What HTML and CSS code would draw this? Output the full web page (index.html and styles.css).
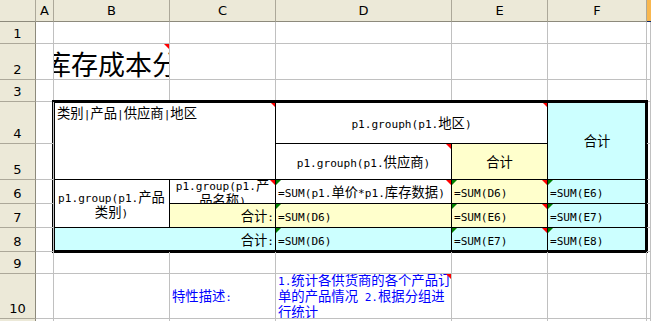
FILE: index.html
```html
<!DOCTYPE html>
<html lang="zh">
<head>
<meta charset="utf-8">
<title>库存成本分析</title>
<link rel="stylesheet" href="styles.css">
</head>
<body>
<div class="sheet">
  <div class="hd"></div><div class="hd">A</div><div class="hd">B</div><div class="hd">C</div><div class="hd">D</div><div class="hd">E</div><div class="hd">F</div><div class="hd hot"></div>

  <div class="rh">1</div><div class="c"></div><div class="c"></div><div class="c"></div><div class="c"></div><div class="c"></div><div class="c"></div><div class="c"></div>

  <div class="rh">2</div><div class="c"></div><div class="c title cm"><span class="ttl">库存成本分析</span></div><div class="c"></div><div class="c"></div><div class="c"></div><div class="c"></div><div class="c"></div>

  <div class="rh">3</div><div class="c"></div><div class="c"></div><div class="c"></div><div class="c"></div><div class="c"></div><div class="c"></div><div class="c"></div>

  <div class="tbl">
    <div class="t top cm span-c2 span-r2"><span class="x">类别<span class="m">|</span>产品<span class="m">|</span>供应商<span class="m">|</span>地区</span></div>
    <div class="t ctr cm span-c2"><span class="x"><span class="m">p1.grouph(p1.</span>地区<span class="m">)</span></span></div>
    <div class="t ctr b span-r2"><span class="x">合计</span></div>
    <div class="t ctr cm"><span class="x"><span class="m">p1.grouph(p1.</span>供应商<span class="m">)</span></span></div>
    <div class="t ctr y"><span class="x">合计</span></div>

    <div class="t ctr span-r2"><span class="x"><span class="m">p1.group(p1.</span>产品<br>类别<span class="m">)</span></span></div>
    <div class="t ctr cm"><span class="x"><span class="m">p1.group(p1.</span>产<br>品名称<span class="m">)</span></span></div>
    <div class="t cm er"><span class="x"><span class="m">=SUM(p1.</span>单价<span class="m">*p1.</span>库存数据<span class="m">)</span></span></div>
    <div class="t y cm er"><span class="x"><span class="m">=SUM(D6)</span></span></div>
    <div class="t b er"><span class="x"><span class="m">=SUM(E6)</span></span></div>

    <div class="t y rt"><span class="x">合计<span class="m">:</span></span></div>
    <div class="t y er"><span class="x"><span class="m">=SUM(D6)</span></span></div>
    <div class="t y cm er"><span class="x"><span class="m">=SUM(E6)</span></span></div>
    <div class="t b er"><span class="x"><span class="m">=SUM(E7)</span></span></div>

    <div class="t b rt span-c2"><span class="x">合计<span class="m">:</span></span></div>
    <div class="t b er"><span class="x"><span class="m">=SUM(D6)</span></span></div>
    <div class="t b cm er"><span class="x"><span class="m">=SUM(E7)</span></span></div>
    <div class="t b er"><span class="x"><span class="m">=SUM(E8)</span></span></div>
  </div>

  <div class="rh">4</div><div class="c"></div><div class="c"></div>
  <div class="rh">5</div><div class="c"></div><div class="c"></div>
  <div class="rh">6</div><div class="c"></div><div class="c"></div>
  <div class="rh">7</div><div class="c"></div><div class="c"></div>
  <div class="rh">8</div><div class="c"></div><div class="c"></div>

  <div class="rh">9</div><div class="c"></div><div class="c"></div><div class="c"></div><div class="c"></div><div class="c"></div><div class="c"></div><div class="c"></div>

  <div class="rh">10</div><div class="c"></div><div class="c"></div>
  <div class="c note"><span class="x">特性描述<span class="m">:</span></span></div>
  <div class="c note desc cm"><span class="x"><span class="m">1.</span>统计各供货商的各个产品订<br>单的产品情况<span class="m"> 2.</span>根据分组进<br>行统计</span></div>
  <div class="c"></div><div class="c"></div><div class="c"></div>

  <div class="rh">11</div><div class="c"></div><div class="c"></div><div class="c"></div><div class="c"></div><div class="c"></div><div class="c"></div><div class="c"></div>
</div>
</body>
</html>
```

FILE: styles.css
```css
* { box-sizing: border-box; }

html, body {
  margin: 0;
  padding: 0;
  background: #fff;
  overflow: hidden;
}

.sheet {
  display: grid;
  grid-template-columns: 36px 18px 116px 106px 176px 96px 99px 1fr;
  grid-template-rows: 22px 22px 36px 22px 42px 36px 24px 24px 24px 22px 45px 20px;
  width: 651px;
  height: 321px;
  overflow: hidden;
  font-family: "Noto Sans CJK SC", sans-serif;
  color: #000;
}

.hd {
  background: #ECE9D8;
  border-right: 1px solid #ACA899;
  border-bottom: 1px solid #8D8A7C;
  font: 13px/21px "DejaVu Sans", sans-serif;
  text-align: center;
}

.hd.hot {
  background: #F8B74F;
  border-right: none;
  border-bottom: 1px solid #0A246A;
}

.rh {
  background: #ECE9D8;
  border-right: 1px solid #8D8A7C;
  border-bottom: 1px solid #ACA899;
  font: 13px/15px "DejaVu Sans", sans-serif;
  display: flex;
  align-items: flex-end;
  justify-content: center;
  padding-bottom: 2px;
}

.c {
  position: relative;
  border-right: 1px solid #C0C0C0;
  border-bottom: 1px solid #C0C0C0;
}

.title {
  overflow: hidden;
  display: flex;
  align-items: flex-end;
  padding-bottom: 2px;
}

.ttl {
  display: block;
  margin-left: -10px;
  white-space: nowrap;
  font-size: 27px;
  line-height: 27px;
}

.x { display: block; }

.m {
  font-family: "DejaVu Sans Mono", monospace;
  font-size: 11.1px;
  line-height: 8px;
}

/* report table */
.tbl {
  grid-column: 3 / 8;
  grid-row: 5 / 10;
  position: relative;
  display: grid;
  grid-template-columns: 116px 106px 176px 96px 99px;
  grid-template-rows: 42px 36px 24px 24px 24px;
}

.tbl::after {
  content: "";
  position: absolute;
  left: -2px;
  top: -2px;
  right: -1px;
  bottom: -1px;
  border: 3px solid #000;
  pointer-events: none;
}

.t {
  position: relative;
  display: flex;
  align-items: center;
  padding: 0 2px;
  background: #fff;
  border-right: 1px solid #000;
  border-bottom: 1px solid #000;
  font-size: 13.33px;
  line-height: 15px;
  white-space: nowrap;
  overflow: hidden;
}

.span-c2 { grid-column: span 2; }
.span-r2 { grid-row: span 2; }

.ctr { justify-content: center; text-align: center; }
.rt { justify-content: flex-end; padding-right: 1px; }
.top { align-items: flex-start; padding: 3px 3px; }

.y { background: #FFFFCC; }
.b { background: #CCFFFF; }

/* comment indicator (red) and error indicator (green) */
.cm::after {
  content: "";
  position: absolute;
  top: 0;
  right: 0;
  width: 0;
  height: 0;
  border-top: 5px solid #FF0000;
  border-left: 5px solid transparent;
}

.er::before {
  content: "";
  position: absolute;
  top: 0;
  left: 0;
  width: 0;
  height: 0;
  border-top: 5px solid #008000;
  border-right: 5px solid transparent;
}

/* description row */
.note {
  display: flex;
  align-items: center;
  padding: 0 2px;
  color: #0000FF;
  font-size: 13.33px;
  line-height: 16px;
  white-space: nowrap;
  overflow: hidden;
}
```
